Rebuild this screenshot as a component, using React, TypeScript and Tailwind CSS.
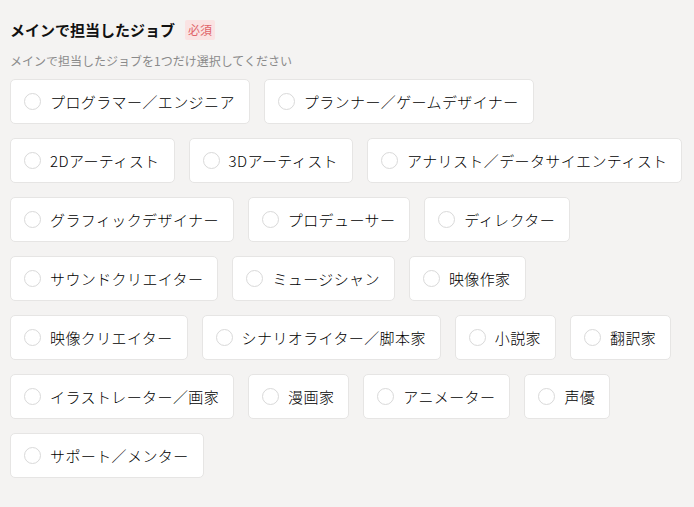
const jobs = [
  "プログラマー／エンジニア",
  "プランナー／ゲームデザイナー",
  "2Dアーティスト",
  "3Dアーティスト",
  "アナリスト／データサイエンティスト",
  "グラフィックデザイナー",
  "プロデューサー",
  "ディレクター",
  "サウンドクリエイター",
  "ミュージシャン",
  "映像作家",
  "映像クリエイター",
  "シナリオライター／脚本家",
  "小説家",
  "翻訳家",
  "イラストレーター／画家",
  "漫画家",
  "アニメーター",
  "声優",
  "サポート／メンター",
];

function JobOption({ label }: { label: string }) {
  return (
    <label className="flex h-[45px] cursor-pointer items-center gap-[9px] rounded-[5px] border border-[#e6e5e4] bg-white pl-[13px] pr-[14px]">
      <input type="radio" name="main-job" className="peer sr-only" />
      <span className="h-[17px] w-[17px] shrink-0 rounded-full border-[1.5px] border-[#d9d9d9] bg-white" />
      <span className="whitespace-nowrap text-[15px] font-light leading-[20px] tracking-[0.4px] text-black">
        {label}
      </span>
    </label>
  );
}

export default function App() {
  return (
    <div
      className="min-h-screen bg-[#f4f3f2] pl-[10px] pr-0 pt-[19px] pb-7"
      style={{ fontFamily: '"Noto Sans CJK JP", "Noto Sans", sans-serif' }}
    >
      {/* Header */}
      <div className="flex h-[22px] items-center gap-[10px]">
        <h2 className="text-[15px] font-bold leading-[20px] text-[#111]">
          メインで担当したジョブ
        </h2>
        <span className="rounded-[2px] bg-[#fae3e3] px-[3px] text-[12px] leading-[20px] text-[#e0646a]">
          必須
        </span>
      </div>
      <p className="mt-[12px] text-[12px] leading-[16px] text-[#8a8a8a]">
        メインで担当したジョブを1つだけ選択してください
      </p>

      {/* Options */}
      <div className="mt-[10px] flex flex-wrap gap-x-[14px] gap-y-[14px]">
        {jobs.map((job) => (
          <JobOption key={job} label={job} />
        ))}
      </div>
    </div>
  );
}
